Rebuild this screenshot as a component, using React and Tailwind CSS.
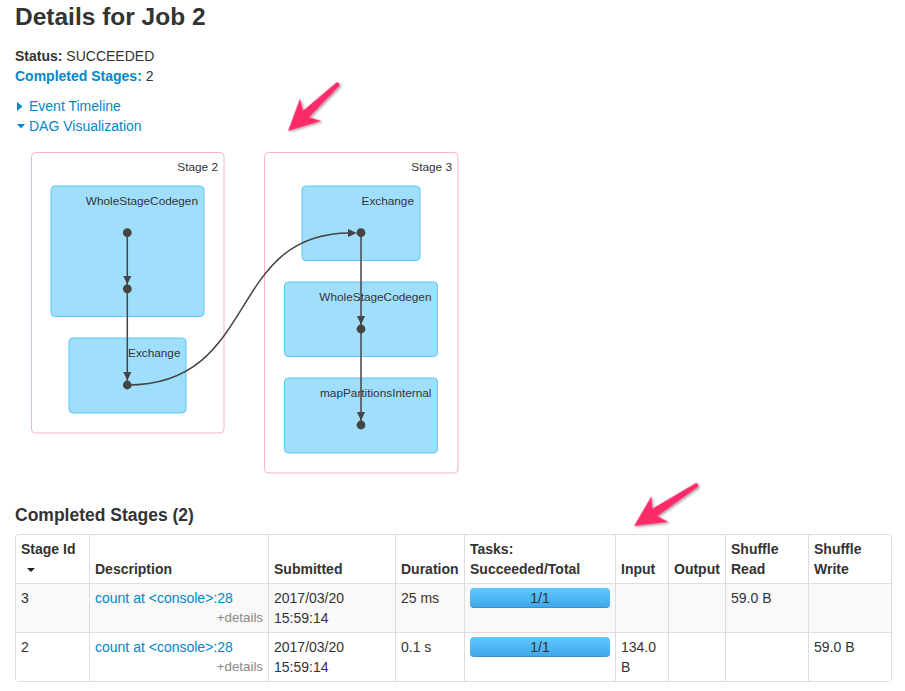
import React from 'react';

const stages = [
  { id: '3', desc: 'count at <console>:28', date: '2017/03/20', time: '15:59:14', duration: '25 ms', tasks: '1/1', input: '', output: '', read: '59.0 B', write: '' },
  { id: '2', desc: 'count at <console>:28', date: '2017/03/20', time: '15:59:14', duration: '0.1 s', tasks: '1/1', input: ['134.0', 'B'], output: '', read: '', write: '59.0 B' },
];

const PinkArrow = ({ x, y, angle, len }) => (
  <g transform={`translate(${x} ${y}) rotate(${angle})`} filter="url(#arrowShadow)">
    <path
      d={`M0 0 L31 -15.5 L25 -4.5 L${len} -2.2 Q${len + 2.5} 0 ${len} 2.2 L25 4.5 L31 15.5 Z`}
      fill="#fd2c6b"
    />
  </g>
);

const DagViz = () => (
  <svg width="470" height="369" className="block -ml-[15px]">
    <g transform="translate(0 -136)" fontFamily="'Liberation Sans', Arial, sans-serif" fontSize="11.8" fill="#333">
      {/* stage clusters */}
      <rect x="31.5" y="152.5" width="192.5" height="280.5" rx="4" fill="#fff" stroke="#f9b3c2" />
      <rect x="264.5" y="152.5" width="193.5" height="320.5" rx="4" fill="#fff" stroke="#f9b3c2" />
      <text x="218" y="171" textAnchor="end">Stage 2</text>
      <text x="452" y="171" textAnchor="end">Stage 3</text>

      {/* operator nodes */}
      <rect x="51" y="186" width="153" height="130.5" rx="4" fill="#a0dffc" stroke="#5cc7f8" />
      <rect x="69" y="338" width="117" height="75" rx="4" fill="#a0dffc" stroke="#5cc7f8" />
      <rect x="302" y="186" width="118" height="74.5" rx="4" fill="#a0dffc" stroke="#5cc7f8" />
      <rect x="284.5" y="282" width="153" height="74.5" rx="4" fill="#a0dffc" stroke="#5cc7f8" />
      <rect x="284.5" y="378" width="153" height="75" rx="4" fill="#a0dffc" stroke="#5cc7f8" />
      <text x="198" y="205.3" textAnchor="end">WholeStageCodegen</text>
      <text x="180.5" y="356.7" textAnchor="end">Exchange</text>
      <text x="414" y="205" textAnchor="end">Exchange</text>
      <text x="431.5" y="301" textAnchor="end">WholeStageCodegen</text>
      <text x="431.5" y="396.7" textAnchor="end">mapPartitionsInternal</text>

      {/* edges */}
      <g stroke="#444" strokeWidth="1.5" fill="none">
        <path d="M127.3 232.7 V385" />
        <path d="M361 232.7 V425" />
        <path d="M127.3 385 C260 385 225 233 350 233" />
      </g>
      <g fill="#444">
        <polygon points="123.3,276 131.3,276 127.3,284.6" />
        <polygon points="123.3,372 131.3,372 127.3,380.8" />
        <polygon points="357,316 365,316 361,324.8" />
        <polygon points="357,412 365,412 361,420.8" />
        <polygon points="348,229 348,237 356.8,233" />
        <circle cx="127.3" cy="232.7" r="4.4" />
        <circle cx="127.3" cy="288.8" r="4.4" />
        <circle cx="127.3" cy="385" r="4.4" />
        <circle cx="361" cy="232.7" r="4.4" />
        <circle cx="361" cy="329" r="4.4" />
        <circle cx="361" cy="425" r="4.4" />
      </g>
    </g>
  </svg>
);

export default function App() {
  const th = 'border-l border-[#ddd] px-[5px] py-[4px] text-left align-bottom font-bold';
  const td = 'border-l border-t border-[#ddd] px-[5px] py-[4px] align-top';

  return (
    <div className="relative min-h-screen bg-white px-[15px] font-['Liberation_Sans',Arial,sans-serif] text-[14px] leading-5 text-[#333]">
      <h3 className="pt-[2px] text-[24.5px] font-bold leading-[30px]">Details for Job 2</h3>

      <ul className="mt-[14px]">
        <li>
          <strong>Status:</strong> SUCCEEDED
        </li>
        <li>
          <a className="font-bold text-[#0088cc]">Completed Stages:</a> 2
        </li>
      </ul>

      <div className="mt-[10px]">
        <a className="flex items-center text-[#0088cc]">
          <svg width="6" height="9" className="ml-[2px] mr-[6px]">
            <polygon points="0,0 5.5,4.5 0,9" fill="#0088cc" />
          </svg>
          Event Timeline
        </a>
        <a className="flex items-center text-[#0088cc]">
          <svg width="8" height="5" className="ml-[2px] mr-[4px]">
            <polygon points="0,0 8,0 4,4.5" fill="#0088cc" />
          </svg>
          DAG Visualization
        </a>
      </div>

      <DagViz />

      <h4 className="text-[17.5px] font-bold leading-5">Completed Stages (2)</h4>

      <table className="mt-[9px] w-[877px] table-fixed border-separate border-spacing-0 rounded-[4px] border border-[#ddd]">
        <thead>
          <tr>
            <th className="w-[73px] px-[5px] py-[4px] text-left align-bottom font-bold">
              Stage Id
              <br />
              <svg width="8" height="4" className="ml-[6px] inline-block align-middle">
                <polygon points="0,0 8,0 4,4" fill="#222" />
              </svg>
            </th>
            <th className={`${th} w-[179px]`}>Description</th>
            <th className={`${th} w-[127px]`}>Submitted</th>
            <th className={`${th} w-[69px]`}>Duration</th>
            <th className={`${th} w-[151px]`}>
              Tasks:
              <br />
              Succeeded/Total
            </th>
            <th className={`${th} w-[53px]`}>Input</th>
            <th className={`${th} w-[57px]`}>Output</th>
            <th className={`${th} w-[83px]`}>
              Shuffle
              <br />
              Read
            </th>
            <th className={`${th} w-[83px]`}>
              Shuffle
              <br />
              Write
            </th>
          </tr>
        </thead>
        <tbody>
          {stages.map((s, i) => (
            <tr key={s.id} className={i === 0 ? 'bg-[#f9f9f9]' : 'bg-white'}>
              <td className="border-t border-[#ddd] px-[5px] py-[4px] align-top">{s.id}</td>
              <td className={td}>
                <a className="block text-[#0088cc]">{s.desc}</a>
                <span className="block text-right text-[13.3px] text-[#888]">+details</span>
              </td>
              <td className={td}>
                {s.date}
                <br />
                {s.time}
              </td>
              <td className={td}>{s.duration}</td>
              <td className={td}>
                <div className="h-5 w-full rounded-[4px] bg-gradient-to-b from-[#60c9ff] to-[#3ea6e8] text-center leading-5 text-[#333] shadow-[inset_0_-1px_0_rgba(0,0,0,0.12)]">
                  {s.tasks}
                </div>
              </td>
              <td className={td}>
                {Array.isArray(s.input) ? (
                  <>
                    {s.input[0]}
                    <br />
                    {s.input[1]}
                  </>
                ) : (
                  s.input
                )}
              </td>
              <td className={td}>{s.output}</td>
              <td className={td}>{s.read}</td>
              <td className={td}>{s.write}</td>
            </tr>
          ))}
        </tbody>
      </table>

      {/* screenshot annotations */}
      <svg width="905" height="691" className="pointer-events-none absolute left-0 top-0">
        <defs>
          <filter id="arrowShadow" x="-30%" y="-30%" width="160%" height="160%">
            <feDropShadow dx="0.5" dy="2" stdDeviation="1.2" floodColor="#000" floodOpacity="0.35" />
          </filter>
        </defs>
        <PinkArrow x={288} y={131} angle={-43.2} len={68.6} />
        <PinkArrow x={634} y={526} angle={-33.1} len={75.2} />
      </svg>
    </div>
  );
}
